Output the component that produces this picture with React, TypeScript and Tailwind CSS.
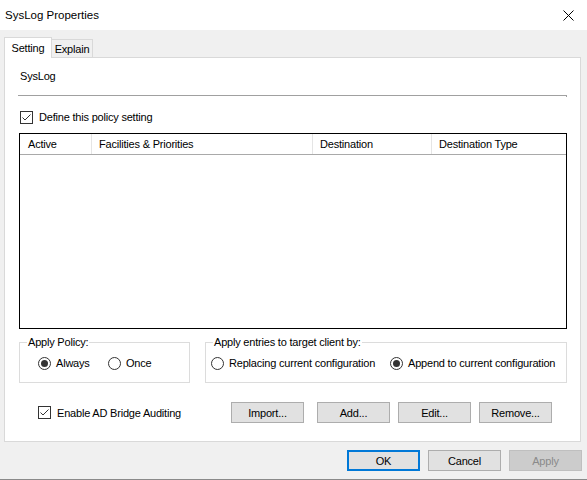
import type { ReactNode } from 'react';

function CheckBox({ checked, children }: { checked: boolean; children: ReactNode }) {
  return (
    <div className="flex items-center gap-[6px] h-[14px]">
      <span className="w-[13px] h-[13px] shrink-0 border border-[#333333] bg-white flex items-center justify-center">
        {checked && (
          <svg width="11" height="11" viewBox="0 0 11 11">
            <path d="M1.5 5.5 L4 8 L9.5 2.5" stroke="#333333" strokeWidth="1" fill="none" />
          </svg>
        )}
      </span>
      <span>{children}</span>
    </div>
  );
}

function Radio({ checked, children, className = '' }: { checked: boolean; children: ReactNode; className?: string }) {
  return (
    <div className={`flex items-center gap-[5px] h-[14px] ${className}`}>
      <span className="w-[13px] h-[13px] shrink-0 rounded-full border border-[#333333] bg-white flex items-center justify-center">
        {checked && <span className="w-[7px] h-[7px] rounded-full bg-[#333333]" />}
      </span>
      <span>{children}</span>
    </div>
  );
}

type Variant = 'normal' | 'default' | 'disabled';

const variantCls: Record<Variant, string> = {
  normal: 'bg-[#e1e1e1] border border-[#adadad]',
  default: 'bg-[#e1e1e1] border-2 border-[#0078d7]',
  disabled: 'bg-[#cccccc] border border-[#bfbfbf] text-[#8a8a8a]',
};

function Button({ children, className = '', variant = 'normal' }: { children: ReactNode; className?: string; variant?: Variant }) {
  return (
    <div className={`w-[73px] h-[21px] flex items-center justify-center ${variantCls[variant]} ${className}`}>
      {children}
    </div>
  );
}

const columns = [
  { label: 'Active', cls: 'w-[72px] pl-[8px] border-r border-[#e5e5e5]' },
  { label: 'Facilities & Priorities', cls: 'w-[221px] pl-[7px] border-r border-[#e5e5e5]' },
  { label: 'Destination', cls: 'w-[119px] pl-[7px] border-r border-[#e5e5e5]' },
  { label: 'Destination Type', cls: 'flex-1 pl-[7px]' },
];

export default function App() {
  return (
    <div className="w-[587px] h-[480px] bg-[#f0f0f0] flex flex-col border-b border-[#8a8a8a] text-black text-[11px] leading-[14px] tracking-[-0.2px] font-[family-name:Liberation_Sans,Arial,sans-serif]">
      {/* title bar */}
      <div className="h-[30px] shrink-0 bg-white flex items-center justify-between pl-[5px] pr-[13px]">
        <span className="text-[11.5px] tracking-normal">SysLog Properties</span>
        <svg width="11" height="11" viewBox="0 0 11 11">
          <path d="M0.5 0.5 L10.5 10.5 M10.5 0.5 L0.5 10.5" stroke="#000" strokeWidth="1" />
        </svg>
      </div>

      <div className="pl-[4px] pt-[7px]">
        {/* tabs */}
        <div className="flex items-end h-[20px]">
          <div className="relative z-10 -mb-px w-[48px] h-[21px] bg-white border border-b-0 border-[#d9d9d9] flex items-center justify-center">
            Setting
          </div>
          <div className="w-[41px] h-[18px] border-t border-r border-[#d9d9d9] flex items-center justify-center">
            Explain
          </div>
        </div>

        {/* tab page */}
        <div className="w-[577px] h-[385px] bg-white border border-[#d9d9d9] pl-[14px] pr-[13px] pt-[11px]">
          <div className="h-[14px] pl-px">SysLog</div>

          <div className="flex -ml-px mt-[12px]">
            <div className="flex-1 h-px bg-[#a0a0a0]" />
            <div className="w-px h-[2px] bg-[#a0a0a0]" />
          </div>

          <div className="mt-[13px] ml-px">
            <CheckBox checked>Define this policy setting</CheckBox>
          </div>

          {/* list view */}
          <div className="mt-[9px] h-[196px] border border-black flex flex-col">
            <div className="h-[21px] flex border-b border-[#a9a9a9]">
              {columns.map((c) => (
                <div key={c.label} className={`flex items-center ${c.cls}`}>
                  {c.label}
                </div>
              ))}
            </div>
          </div>

          {/* option groups */}
          <div className="mt-[6px] flex">
            <fieldset className="w-[171px] border border-[#dcdcdc] px-0">
              <legend className="ml-[7px] px-[1px] leading-[14px]">Apply Policy:</legend>
              <div className="pt-[7px] pb-[12px] pl-[18px] flex">
                <Radio checked className="w-[70px]">Always</Radio>
                <Radio checked={false}>Once</Radio>
              </div>
            </fieldset>
            <fieldset className="flex-1 ml-[15px] border border-[#dcdcdc] px-0">
              <legend className="ml-[7px] px-[1px] leading-[14px]">Apply entries to target client by:</legend>
              <div className="pt-[7px] pb-[12px] pl-[5px] flex">
                <Radio checked={false} className="w-[179px]">Replacing current configuration</Radio>
                <Radio checked>Append to current configuration</Radio>
              </div>
            </fieldset>
          </div>

          {/* auditing + list buttons */}
          <div className="mt-[19px] h-[21px] flex items-center">
            <div className="w-[212px] pl-[19px]">
              <CheckBox checked>Enable AD Bridge Auditing</CheckBox>
            </div>
            <Button>Import...</Button>
            <Button className="ml-[13px]">Add...</Button>
            <Button className="ml-[8px]">Edit...</Button>
            <Button className="ml-[8px]">Remove...</Button>
          </div>
        </div>
      </div>

      {/* dialog buttons */}
      <div className="mt-[8px] flex justify-end gap-[8px] pr-[5px]">
        <Button variant="default">OK</Button>
        <Button>Cancel</Button>
        <Button variant="disabled">Apply</Button>
      </div>
    </div>
  );
}
